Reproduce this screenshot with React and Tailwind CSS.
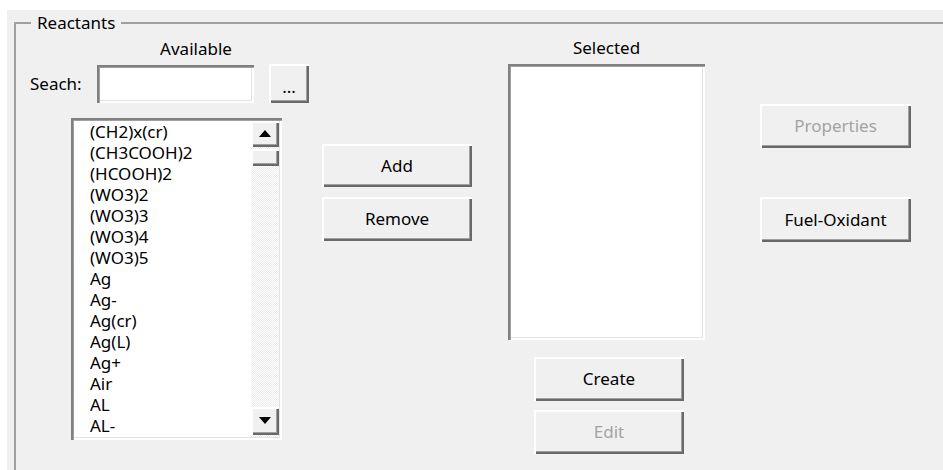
import React from "react";

const items = [
  "(CH2)x(cr)",
  "(CH3COOH)2",
  "(HCOOH)2",
  "(WO3)2",
  "(WO3)3",
  "(WO3)4",
  "(WO3)5",
  "Ag",
  "Ag-",
  "Ag(cr)",
  "Ag(L)",
  "Ag+",
  "Air",
  "AL",
  "AL-",
];

function Button({ label, disabled, className }) {
  return (
    <button
      type="button"
      className={
        "flex items-center justify-center bg-[#f0f0f0] text-[17px] leading-[20px] shadow-[inset_2px_2px_0_#ffffff,inset_-2px_-2px_0_#696969,inset_-3px_-3px_0_#a0a0a0] " +
        (disabled ? "text-[#a3a3a3] " : "text-black ") +
        className
      }
    >
      {label}
    </button>
  );
}

function Arrow({ up }) {
  return (
    <svg width="12" height="7" viewBox="0 0 12 7">
      {up ? <polygon points="6,0 12,7 0,7" fill="#000" /> : <polygon points="0,0 12,0 6,7" fill="#000" />}
    </svg>
  );
}

function ScrollBar() {
  return (
    <div className="flex h-full w-[28px] flex-col bg-[repeating-conic-gradient(#ececec_0_25%,#ffffff_0_50%)] bg-[length:2px_2px]">
      <div className="flex h-[26px] items-center justify-center bg-[#f0f0f0] pb-[1px] shadow-[inset_2px_2px_0_#ffffff,inset_-2px_-2px_0_#696969,inset_-3px_-3px_0_#a0a0a0]">
        <Arrow up />
      </div>
      <div className="mt-[2px] h-[17px] bg-[#f0f0f0] shadow-[inset_2px_2px_0_#ffffff,inset_-2px_-2px_0_#696969,inset_-3px_-3px_0_#a0a0a0]" />
      <div className="flex-1" />
      <div className="mb-[2px] flex h-[28px] items-center justify-center bg-[#f0f0f0] pb-[1px] shadow-[inset_2px_2px_0_#ffffff,inset_-2px_-2px_0_#696969,inset_-3px_-3px_0_#a0a0a0]">
        <Arrow />
      </div>
    </div>
  );
}

export default function App() {
  return (
    <div
      className="h-[470px] w-[943px] overflow-hidden bg-white pl-[7px] pt-[10px] text-black"
      style={{ fontFamily: '"Noto Sans", "Open Sans", sans-serif' }}
    >
      <div className="h-full bg-[#f0f0f0] pl-[7px] pt-[3px]">
        <fieldset className="m-0 h-[470px] min-w-0 border-0 border-l-2 border-t-2 border-[#a0a0a0] p-0">
          <legend className="ml-[15px] px-[6px] text-[17px] leading-[20px]">Reactants</legend>

          <div className="flex items-start">
            {/* Available column */}
            <div className="ml-[14px] flex w-[279px] flex-col">
              <div className="ml-[126px] mt-[6px] w-[80px] text-center text-[17px] leading-[20px]">Available</div>
              <div className="mt-[5px] flex items-center">
                <span className="w-[67px] text-[17px] leading-[20px]">Seach:</span>
                <div className="h-[38px] w-[157px] bg-white shadow-[inset_2px_2px_0_#808080,inset_3px_3px_0_#a0a0a0,inset_-2px_-2px_0_#ffffff,inset_-3px_-3px_0_#e3e3e3]" />
                <Button label="..." className="ml-[15px] h-[39px] w-[40px] pt-[7px]" />
              </div>
              <div className="ml-[41px] mt-[15px] flex h-[322px] w-[211px] bg-white p-[3px] shadow-[inset_2px_2px_0_#808080,inset_3px_3px_0_#a0a0a0,inset_-2px_-2px_0_#ffffff,inset_-3px_-3px_0_#e3e3e3]">
                <div className="flex-1 overflow-hidden">
                  <ul className="pl-[16px] text-[17px] leading-[21px]">
                    {items.map((it) => (
                      <li key={it}>{it}</li>
                    ))}
                  </ul>
                </div>
                <ScrollBar />
              </div>
            </div>

            {/* Add / Remove */}
            <div className="ml-[13px] flex flex-col">
              <Button label="Add" className="mt-[111px] h-[43px] w-[150px]" />
              <Button label="Remove" className="mt-[10px] h-[44px] w-[150px]" />
            </div>

            {/* Selected column */}
            <div className="ml-[36px] flex w-[197px] flex-col">
              <div className="mt-[5px] text-center text-[17px] leading-[20px]">Selected</div>
              <div className="mt-[6px] h-[276px] w-[197px] bg-white shadow-[inset_2px_2px_0_#808080,inset_3px_3px_0_#a0a0a0,inset_-2px_-2px_0_#ffffff,inset_-3px_-3px_0_#e3e3e3]" />
              <Button label="Create" className="ml-[26px] mt-[17px] h-[44px] w-[150px]" />
              <Button label="Edit" disabled className="ml-[26px] mt-[9px] h-[44px] w-[150px]" />
            </div>

            {/* Right-hand actions */}
            <div className="ml-[55px] flex flex-col">
              <Button label="Properties" disabled className="mt-[71px] h-[44px] w-[151px]" />
              <Button label="Fuel-Oxidant" className="mt-[49px] h-[45px] w-[151px]" />
            </div>
          </div>
        </fieldset>
      </div>
    </div>
  );
}
